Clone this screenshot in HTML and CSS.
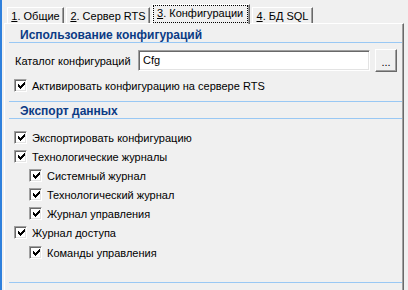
FILE: index.html
```html
<!DOCTYPE html>
<html lang="ru">
<head>
    <meta charset="UTF-8">
    <title>Конфигурации</title>
    <link rel="stylesheet" href="styles.css">
</head>
<body>
    <div class="window">
        <div class="tabs">
            <div class="tab t1"><u>1</u>. Общие</div>
            <div class="tab t2"><u>2</u>. Сервер RTS</div>
            <div class="tab t3 active"><span class="focus"><u>3</u>. Конфигурации</span></div>
            <div class="tab t4"><u>4</u>. БД SQL</div>
        </div>
        <div class="panel">
            <div class="group">
                <div class="section">Использование конфигураций</div>
                <div class="field">
                    <span class="label">Каталог конфигураций</span>
                    <div class="input">Cfg</div>
                    <button class="browse">...</button>
                </div>
                <label class="check first"><span class="box"><svg width="7" height="7" viewBox="0 0 7 7"><path d="M0 2V5H1V6H2V7H3V6H4V5H5V4H6V3H7V0H6V1H5V2H4V3H3V4H2V3H1V2Z"/></svg></span>Активировать конфигурацию на сервере RTS</label>
            </div>
            <div class="group">
                <div class="section">Экспорт данных</div>
                <div class="list">
                    <label class="check"><span class="box"><svg width="7" height="7" viewBox="0 0 7 7"><path d="M0 2V5H1V6H2V7H3V6H4V5H5V4H6V3H7V0H6V1H5V2H4V3H3V4H2V3H1V2Z"/></svg></span>Экспортировать конфигурацию</label>
                    <label class="check"><span class="box"><svg width="7" height="7" viewBox="0 0 7 7"><path d="M0 2V5H1V6H2V7H3V6H4V5H5V4H6V3H7V0H6V1H5V2H4V3H3V4H2V3H1V2Z"/></svg></span>Технологические журналы</label>
                    <label class="check sub"><span class="box"><svg width="7" height="7" viewBox="0 0 7 7"><path d="M0 2V5H1V6H2V7H3V6H4V5H5V4H6V3H7V0H6V1H5V2H4V3H3V4H2V3H1V2Z"/></svg></span>Системный журнал</label>
                    <label class="check sub"><span class="box"><svg width="7" height="7" viewBox="0 0 7 7"><path d="M0 2V5H1V6H2V7H3V6H4V5H5V4H6V3H7V0H6V1H5V2H4V3H3V4H2V3H1V2Z"/></svg></span>Технологический журнал</label>
                    <label class="check sub"><span class="box"><svg width="7" height="7" viewBox="0 0 7 7"><path d="M0 2V5H1V6H2V7H3V6H4V5H5V4H6V3H7V0H6V1H5V2H4V3H3V4H2V3H1V2Z"/></svg></span>Журнал управления</label>
                    <label class="check"><span class="box"><svg width="7" height="7" viewBox="0 0 7 7"><path d="M0 2V5H1V6H2V7H3V6H4V5H5V4H6V3H7V0H6V1H5V2H4V3H3V4H2V3H1V2Z"/></svg></span>Журнал доступа</label>
                    <label class="check sub last"><span class="box"><svg width="7" height="7" viewBox="0 0 7 7"><path d="M0 2V5H1V6H2V7H3V6H4V5H5V4H6V3H7V0H6V1H5V2H4V3H3V4H2V3H1V2Z"/></svg></span>Команды управления</label>
                </div>
            </div>
        </div>
    </div>
</body>
</html>
```

FILE: styles.css
```css
* { box-sizing: border-box; margin: 0; padding: 0; }
body { width: 408px; height: 290px; overflow: hidden; background: #f0f0f0; font-family: "Liberation Sans", Arial, sans-serif; font-size: 11px; color: #000; border-left: 2px solid #2f80dc; }
.window { padding: 4px 0 0 2px; height: 100%; }
.tabs { display: flex; align-items: flex-end; height: 19px; }
.tab { height: 16px; padding-top: 2px; border: 1px solid #fff; border-bottom: none; border-right-color: #696969; box-shadow: inset -1px 0 #a0a0a0; margin-right: 2px; white-space: nowrap; line-height: 13px; text-align: center; }
.t1 { width: 57px; margin-left: 3px; }
.t2 { width: 84px; }
.t3 { width: 98px; }
.t4 { width: 61px; }
.tab.active { height: 20px; padding: 0 1px 1px 0; margin-bottom: -1px; position: relative; z-index: 1; background: #f0f0f0; text-align: left; }
.focus { display: block; height: 18px; border: 1px dotted #000; padding: 1px 0 0 3px; line-height: 13px; }
.panel { width: 400px; height: 270px; border-top: 1px solid #fff; border-left: 1px solid #fff; border-right: 1px solid #696969; box-shadow: inset -1px 0 #a0a0a0; padding: 0 1px 0 4px; }
.group { border-bottom: 1px solid #99c8f4; }
.group + .group { margin-top: 2px; padding-bottom: 20px; }
.section { margin-top: 4px; font-weight: bold; color: #0b3b85; font-size: 12px; line-height: 14px; padding-left: 11px; border-bottom: 1px solid #99c8f4; }
.group + .group .section { margin-top: 0; }
.field { display: flex; align-items: center; height: 23px; margin-top: 6px; padding-left: 6px; }
.label { width: 123px; white-space: nowrap; }
.input { width: 232px; height: 21px; background: #fff; border: 1px solid #a0a0a0; border-right-color: #fff; border-bottom-color: #fff; box-shadow: inset 1px 1px #696969, inset -1px -1px #e3e3e3; padding: 3px 4px; line-height: 13px; }
.browse { width: 22px; height: 23px; margin-left: 5px; background: #f0f0f0; border: 1px solid #fff; border-right-color: #696969; border-bottom-color: #696969; box-shadow: inset -1px -1px #a0a0a0; font-family: inherit; font-size: 11px; line-height: 13px; padding-top: 4px; }
.check { display: flex; align-items: center; height: 19px; padding-left: 5px; white-space: nowrap; }
.check.first { margin: 4px 0 6px; }
.list { padding-top: 9px; }
.check.sub { padding-left: 20px; }
.check.last { margin-top: 1px; }
.box { flex: none; width: 13px; height: 13px; margin-right: 5px; background: #fff; border: 1px solid #a0a0a0; border-right-color: #fff; border-bottom-color: #fff; box-shadow: inset 1px 1px #696969, inset -1px -1px #e3e3e3; padding: 2px 0 0 3px; }
.box svg { display: block; shape-rendering: crispEdges; }
```
